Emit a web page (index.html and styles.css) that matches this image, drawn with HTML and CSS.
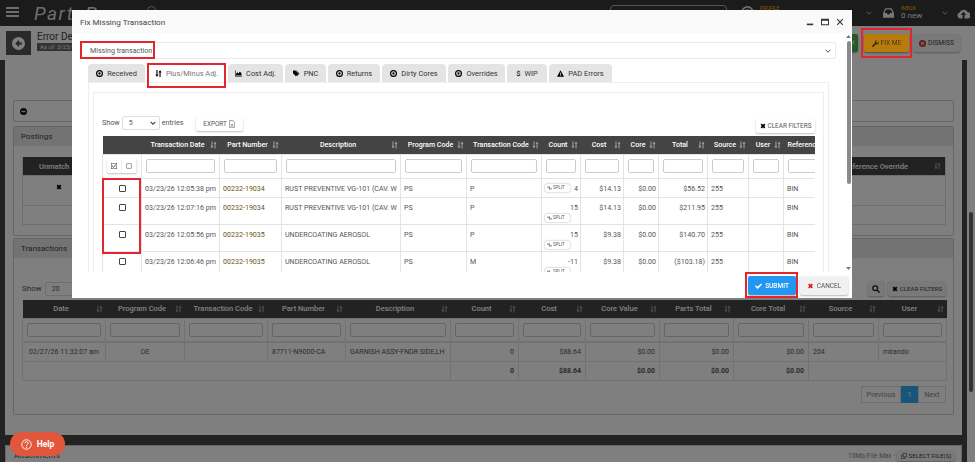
FILE: index.html
```html
<!DOCTYPE html>
<html lang="en">

<head>
    <meta charset="UTF-8">
    <meta name="viewport" content="width=device-width, initial-scale=1.0">
    <title>Fix Missing Transaction</title>
    <link rel="stylesheet" href="styles.css">
</head>

<body>

    <svg class="defs" aria-hidden="true">
        <symbol id="sort" viewBox="0 0 10 10"><path d="M2 0h1.600v6.500H5L2.800 10 .6 6.500H2zM6.400 10h1.600V3.500h1.400L7.200 0 5 3.500h1.400z" /></symbol>
        <symbol id="times" viewBox="0 0 10 10"><path d="M1 3l2-2 2 2 2-2 2 2-2 2 2 2-2 2-2-2-2 2-2-2 2-2z" /></symbol>
        <symbol id="check" viewBox="0 0 12 10"><path d="M0 5.500l1.800-1.800 2.700 2.700L10.200 .7 12 2.500 4.500 10z" /></symbol>
        <symbol id="split" viewBox="0 0 12 8"><path d="M5 0l3 2-3 2V3H0V1h5zM7 4v1h5v2H7v1L4 6z" /></symbol>
        <symbol id="dot" viewBox="0 0 12 12"><path fill-rule="evenodd" d="M6 0a6 6 0 1 1 0 12A6 6 0 0 1 6 0zm0 2a4 4 0 1 0 0 8 4 4 0 0 0 0-8zm0 2a2 2 0 1 1 0 4 2 2 0 0 1 0-4z" /></symbol>
    </svg>

    <div class="app">
        <header class="topbar">
            <div class="burger"><i></i><i></i><i></i></div>
            <div class="logo">PartsPro</div>
            <div class="top-search-icon"></div>
            <div class="top-search"></div>
            <svg class="top-user" viewBox="0 0 14 14"><circle cx="7" cy="7" r="6" fill="none" stroke="#ddd" stroke-width="2" /><circle cx="7" cy="5.500" r="2.200" fill="#ddd" /></svg>
            <div class="top-item top-profile"><span class="top-label">PROFILE</span></div>
            <svg class="top-chev" viewBox="0 0 10 6"><path d="M1 1l4 4 4-4" fill="none" stroke="#ccc" stroke-width="1.500" /></svg>
            <svg class="top-inbox" viewBox="0 0 14 12"><path fill-rule="evenodd" fill="#eee" d="M3 0h8l3 6v6H0V6zm.800 1.500L2 6h3l1 2h2l1-2h3l-1.800-4.500z" /></svg>
            <div class="top-item"><span class="top-label">INBOX</span><span class="top-val">0 new</span></div>
            <svg class="top-chev top-chev2" viewBox="0 0 10 6"><path d="M1 1l4 4 4-4" fill="none" stroke="#ccc" stroke-width="1.500" /></svg>
            <svg class="top-cloud" viewBox="0 0 14 11"><path fill="#eee" d="M3.500 11a3.300 3.300 0 0 1-.6-6.500A4.500 4.500 0 0 1 11.300 4 3.500 3.500 0 0 1 11 11H8V7h2L7 3.500 4 7h2v4z" /></svg>
        </header>

        <div class="subbar">
            <button class="back-btn">
                <svg viewBox="0 0 12 12"><path fill="#fff" fill-rule="evenodd" d="M6 0a6 6 0 1 1 0 12A6 6 0 0 1 6 0zm.500 2.500L3 6l3.500 3.500V7.200H9V4.800H6.500z" /></svg>
            </button>
            <div class="subbar__title">
                <div class="subbar__name">Error Details</div>
                <span class="subbar__date">As of: 3/25/26</span>
            </div>
            <div class="subbar__actions">
                <button class="act-btn act-btn--green">MATCH</button>
                <button class="act-btn act-btn--fix">FIX ME</button>
                <button class="act-btn act-btn--dismiss">
                    <svg viewBox="0 0 10 10"><circle cx="5" cy="5" r="5" fill="#d0322a" /><path d="M3 3l4 4M7 3l-4 4" stroke="#ddd" stroke-width="1.500" /></svg>
                    DISMISS
                </button>
            </div>
        </div>

        <div class="workspace">
            <div class="rail"></div>
            <main class="main">
                <div class="panel panel--note">
                    <svg class="minus-icon" viewBox="0 0 10 10"><circle cx="5" cy="5" r="5" fill="#111" /><rect x="2" y="4" width="6" height="2" fill="#ddd" /></svg>
                </div>

                <section class="panel panel--postings">
                    <h2 class="panel__head">Postings</h2>
                    <div class="panel__body panel__body--post">
                        <div class="post-table">
                            <div class="post-head">
                                <span class="post-unmatch">Unmatch</span>
                                <span class="post-ref">Reference Override</span>
                                <svg class="sort"><use href="#sort" /></svg>
                            </div>
                            <div class="post-row post-row--tall">
                                <svg class="post-x"><use href="#times" /></svg>
                            </div>
                            <div class="post-row"></div>
                        </div>
                    </div>
                </section>

                <section class="panel panel--trans">
                    <h2 class="panel__head">Transactions</h2>
                    <div class="panel__body panel__body--trans">
                        <div class="bg-tools">
                            <span>Show</span>
                            <div class="mini-select mini-select--bg">20</div>
                            <div class="bg-tools__right">
                                <button class="soft-btn soft-btn--icon">
                                    <svg viewBox="0 0 10 10"><circle cx="4" cy="4" r="3" fill="none" stroke="#222" stroke-width="1.600" /><path d="M6.300 6.300L9.500 9.500" stroke="#222" stroke-width="1.800" /></svg>
                                </button>
                                <button class="soft-btn"><svg class="ico-x"><use href="#times" /></svg>CLEAR FILTERS</button>
                            </div>
                        </div>
                        <table class="bg-table">
                            <colgroup>
                                <col class="b1"><col class="b2"><col class="b3"><col class="b4"><col class="b5"><col class="b6"><col class="b7"><col class="b8"><col class="b9"><col class="b10"><col class="b11"><col class="b12">
                            </colgroup>
                            <thead>
                                <tr>
                                    <th><div class="th"><span>Date</span><svg class="sort"><use href="#sort" /></svg></div></th>
                                    <th><div class="th"><span>Program Code</span><svg class="sort"><use href="#sort" /></svg></div></th>
                                    <th><div class="th"><span>Transaction Code</span><svg class="sort"><use href="#sort" /></svg></div></th>
                                    <th><div class="th"><span>Part Number</span><svg class="sort"><use href="#sort" /></svg></div></th>
                                    <th><div class="th"><span>Description</span><svg class="sort"><use href="#sort" /></svg></div></th>
                                    <th><div class="th"><span>Count</span><svg class="sort"><use href="#sort" /></svg></div></th>
                                    <th><div class="th"><span>Cost</span><svg class="sort"><use href="#sort" /></svg></div></th>
                                    <th><div class="th"><span>Core Value</span><svg class="sort"><use href="#sort" /></svg></div></th>
                                    <th><div class="th"><span>Parts Total</span><svg class="sort"><use href="#sort" /></svg></div></th>
                                    <th><div class="th"><span>Core Total</span><svg class="sort"><use href="#sort" /></svg></div></th>
                                    <th><div class="th"><span>Source</span><svg class="sort"><use href="#sort" /></svg></div></th>
                                    <th><div class="th"><span>User</span><svg class="sort"><use href="#sort" /></svg></div></th>
                                </tr>
                                <tr class="filter-row">
                                    <td><input></td><td><input></td><td><input></td><td><input></td><td><input></td><td><input></td><td><input></td><td><input></td><td><input></td><td><input></td><td><input></td><td><input></td>
                                </tr>
                            </thead>
                            <tbody>
                                <tr>
                                    <td class="ctr">02/27/26 11:32:07 am</td>
                                    <td class="ctr">OE</td>
                                    <td></td>
                                    <td>87711-N9000-CA</td>
                                    <td>GARNISH ASSY-FNDR SIDE,LH</td>
                                    <td class="num">0</td>
                                    <td class="num">$88.64</td>
                                    <td class="num">$0.00</td>
                                    <td class="num">$0.00</td>
                                    <td class="num">$0.00</td>
                                    <td>204</td>
                                    <td>mirando</td>
                                </tr>
                                <tr class="total-row">
                                    <td colspan="5"></td>
                                    <td class="num">0</td>
                                    <td class="num">$88.64</td>
                                    <td class="num">$0.00</td>
                                    <td class="num">$0.00</td>
                                    <td class="num">$0.00</td>
                                    <td colspan="2"></td>
                                </tr>
                            </tbody>
                        </table>
                        <div class="pager">
                            <span class="pager__item pager__item--prev">Previous</span>
                            <span class="pager__item pager__item--on">1</span>
                            <span class="pager__item pager__item--next">Next</span>
                        </div>
                    </div>
                </section>

                <div class="band"></div>

                <section class="panel panel--attach">
                    <span class="attach-name">Attachments</span>
                    <span class="attach-max">10Mb/File Max -</span>
                    <button class="soft-btn soft-btn--file">
                        <svg viewBox="0 0 10 10"><path fill="none" stroke="#333" d="M3.500.5h6v6h-6zM.5 3.500h3M.5 3.500v6h6v-3" /></svg>
                        SELECT FILE(S)
                    </button>
                </section>
            </main>
            <div class="rail rail--right"></div>
            <div class="page-scroll"><div class="page-scroll__thumb"></div></div>
        </div>
    </div>

    <div class="backdrop"></div>

    <div class="fix-me-lit">
        <svg viewBox="0 0 10 10"><path d="M9.800 2.300A3 3 0 0 1 5.900 6L2 9.800a1 1 0 0 1-1.600-1.600L4.200 4.300A3 3 0 0 1 7.700.4L6 2.200l.3 1.700 1.800.3z" /></svg>
        FIX ME
    </div>

    <button class="help">
        <svg viewBox="0 0 14 14"><circle cx="7" cy="7" r="6" fill="none" stroke="#fff" stroke-width="1.200" /><path d="M5 5.500a2 2 0 1 1 3 1.700c-.7.400-1 .7-1 1.500" fill="none" stroke="#fff" stroke-width="1.200" /><circle cx="7" cy="10.400" r=".8" fill="#fff" /></svg>
        Help
    </button>

    <div class="modal">
        <div class="modal__head">
            <span class="modal__title">Fix Missing Transaction</span>
            <div class="modal__win">
                <svg viewBox="0 0 10 10"><rect x="1" y="7" width="8" height="2" /></svg>
                <svg viewBox="0 0 10 10"><path fill-rule="evenodd" d="M0 1h10v8H0zm1.200 2.500v4.300h7.600V3.500z" /></svg>
                <svg viewBox="0 0 10 10"><path d="M2 1l3 3 3-3 1 1-3 3 3 3-1 1-3-3-3 3-1-1 3-3-3-3z" /></svg>
            </div>
        </div>

        <div class="modal__middle">
            <div class="modal__body">
                <div class="type-select">
                    <span>Missing transaction</span>
                    <svg viewBox="0 0 10 6"><path d="M1 1l4 4 4-4" fill="none" stroke="#444" stroke-width="1.600" /></svg>
                </div>

                <div class="tabs">
                    <div class="tab tab--received"><svg><use href="#dot" /></svg>Received</div>
                    <div class="tab tab--active tab--plus">
                        <svg viewBox="0 0 10 10"><use href="#sort" /></svg>Plus/Minus Adj.
                    </div>
                    <div class="tab tab--cost">
                        <svg viewBox="0 0 12 10"><path d="M0 0h1v9h11v1H0zM2 8V5l2-2 2 2 2-3 3 2v4z" /></svg>Cost Adj.
                    </div>
                    <div class="tab tab--pnc">
                        <svg viewBox="0 0 12 10"><path d="M0 0h4l5 5-4 4.500L0 4.500zM6 0l5 5-4 4.500-.8-.8L9.500 5 5 0z" /></svg>PNC
                    </div>
                    <div class="tab tab--returns"><svg><use href="#dot" /></svg>Returns</div>
                    <div class="tab tab--dirty"><svg><use href="#dot" /></svg>Dirty Cores</div>
                    <div class="tab tab--over"><svg><use href="#dot" /></svg>Overrides</div>
                    <div class="tab tab--wip"><span class="tab__dollar">$</span>WIP</div>
                    <div class="tab tab--pad">
                        <svg viewBox="0 0 12 11"><path fill-rule="evenodd" d="M6 0l6 11H0zM5.300 4v3.500h1.400V4zm0 4.300v1.300h1.400V8.300z" /></svg>PAD Errors
                    </div>
                </div>

                <div class="tab-pane">
                    <div class="inner-box">
                        <div class="tools">
                            <span>Show</span>
                            <div class="mini-select">5
                                <svg viewBox="0 0 10 6"><path d="M1 1l4 4 4-4" fill="none" stroke="#444" stroke-width="1.800" /></svg>
                            </div>
                            <span>entries</span>
                            <button class="white-btn white-btn--export">EXPORT
                                <svg viewBox="0 0 10 12"><path fill="none" stroke="#555" d="M.5.500h6l3 3v8h-9zM3 6l4 4M7 6l-4 4" /></svg>
                            </button>
                            <button class="white-btn white-btn--clear"><svg class="ico-x"><use href="#times" /></svg>CLEAR FILTERS</button>
                        </div>

                        <div class="tx-wrap">
                            <table class="tx-table">
                                <colgroup>
                                    <col class="m1"><col class="m2"><col class="m3"><col class="m4"><col class="m5"><col class="m6"><col class="m7"><col class="m8"><col class="m9"><col class="m10"><col class="m11"><col class="m12"><col class="m13">
                                </colgroup>
                                <thead>
                                    <tr>
                                        <th></th>
                                        <th><div class="th"><span>Transaction Date</span><svg class="sort"><use href="#sort" /></svg></div></th>
                                        <th><div class="th"><span>Part Number</span><svg class="sort"><use href="#sort" /></svg></div></th>
                                        <th><div class="th"><span>Description</span><svg class="sort"><use href="#sort" /></svg></div></th>
                                        <th><div class="th"><span>Program Code</span><svg class="sort"><use href="#sort" /></svg></div></th>
                                        <th><div class="th"><span>Transaction Code</span><svg class="sort"><use href="#sort" /></svg></div></th>
                                        <th><div class="th"><span>Count</span><svg class="sort"><use href="#sort" /></svg></div></th>
                                        <th><div class="th"><span>Cost</span><svg class="sort"><use href="#sort" /></svg></div></th>
                                        <th><div class="th"><span>Core</span><svg class="sort"><use href="#sort" /></svg></div></th>
                                        <th><div class="th"><span>Total</span><svg class="sort"><use href="#sort" /></svg></div></th>
                                        <th><div class="th"><span>Source</span><svg class="sort"><use href="#sort" /></svg></div></th>
                                        <th><div class="th"><span>User</span><svg class="sort"><use href="#sort" /></svg></div></th>
                                        <th><div class="th th--left"><span>Reference</span></div></th>
                                    </tr>
                                    <tr class="filter-row">
                                        <td>
                                            <div class="check-pair">
                                                <span><svg viewBox="0 0 10 10"><rect x=".5" y=".5" width="9" height="9" fill="none" stroke="#555" /><path d="M2 5l2 2 4-4" fill="none" stroke="#333" stroke-width="1.600" /></svg></span>
                                                <span><svg viewBox="0 0 10 10"><rect x="1" y="1" width="8" height="8" rx="1" fill="none" stroke="#555" /></svg></span>
                                            </div>
                                        </td>
                                        <td><input></td><td><input></td><td><input></td><td><input></td><td><input></td><td><input></td><td><input></td><td><input></td><td><input></td><td><input></td><td><input></td><td><input></td>
                                    </tr>
                                </thead>
                                <tbody>
                                    <tr class="row-short">
                                        <td class="ctr"><input type="checkbox"></td>
                                        <td>03/23/26 12:05:38 pm</td>
                                        <td class="pn">00232-19034</td>
                                        <td>RUST PREVENTIVE VG-101 (CAV. W</td>
                                        <td>PS</td>
                                        <td>P</td>
                                        <td class="num"><button class="split split--block"><svg><use href="#split" /></svg>SPLIT</button>4</td>
                                        <td class="num">$14.13</td>
                                        <td class="num">$0.00</td>
                                        <td class="num">$56.52</td>
                                        <td>255</td>
                                        <td></td>
                                        <td>BIN</td>
                                    </tr>
                                    <tr>
                                        <td class="ctr"><input type="checkbox"></td>
                                        <td>03/23/26 12:07:16 pm</td>
                                        <td class="pn">00232-19034</td>
                                        <td>RUST PREVENTIVE VG-101 (CAV. W</td>
                                        <td>PS</td>
                                        <td>P</td>
                                        <td class="num">15<br><button class="split split--block"><svg><use href="#split" /></svg>SPLIT</button></td>
                                        <td class="num">$14.13</td>
                                        <td class="num">$0.00</td>
                                        <td class="num">$211.95</td>
                                        <td>255</td>
                                        <td></td>
                                        <td>BIN</td>
                                    </tr>
                                    <tr>
                                        <td class="ctr"><input type="checkbox"></td>
                                        <td>03/23/26 12:05:56 pm</td>
                                        <td class="pn">00232-19035</td>
                                        <td>UNDERCOATING AEROSOL</td>
                                        <td>PS</td>
                                        <td>P</td>
                                        <td class="num">15<br><button class="split split--block"><svg><use href="#split" /></svg>SPLIT</button></td>
                                        <td class="num">$9.38</td>
                                        <td class="num">$0.00</td>
                                        <td class="num">$140.70</td>
                                        <td>255</td>
                                        <td></td>
                                        <td>BIN</td>
                                    </tr>
                                    <tr>
                                        <td class="ctr"><input type="checkbox"></td>
                                        <td>03/23/26 12:06:46 pm</td>
                                        <td class="pn">00232-19035</td>
                                        <td>UNDERCOATING AEROSOL</td>
                                        <td>PS</td>
                                        <td>M</td>
                                        <td class="num">-11<br><button class="split split--block"><svg><use href="#split" /></svg>SPLIT</button></td>
                                        <td class="num">$9.38</td>
                                        <td class="num">$0.00</td>
                                        <td class="num">($103.18)</td>
                                        <td>255</td>
                                        <td></td>
                                        <td>BIN</td>
                                    </tr>
                                </tbody>
                            </table>
                        </div>
                    </div>
                </div>
            </div>

            <div class="modal__scroll">
                <svg viewBox="0 0 8 5"><path d="M4 0l4 5H0z" /></svg>
                <div class="modal__thumb"></div>
                <svg class="modal__down" viewBox="0 0 8 5"><path d="M0 0h8L4 5z" /></svg>
            </div>
        </div>

        <div class="modal__foot">
            <button class="foot-btn foot-btn--submit"><svg><use href="#check" /></svg>SUBMIT</button>
            <button class="foot-btn foot-btn--cancel"><svg><use href="#times" /></svg>CANCEL</button>
        </div>
    </div>

    <!-- red markers drawn over the screenshot -->
    <div class="mark mark--select"></div>
    <div class="mark mark--tab"></div>
    <div class="mark mark--checks"></div>
    <div class="mark mark--submit"></div>
    <div class="mark mark--fix"></div>

</body>

</html>
```

FILE: styles.css
```css
* {
    box-sizing: border-box;
}

html,
body {
    height: 100%;
}

body {
    margin: 0;
    overflow: hidden;
    background: #fff;
    color: #555;
    font-family: Roboto, "Liberation Sans", sans-serif;
    font-size: 8px;
}

button {
    font-family: inherit;
    cursor: pointer;
}

.defs {
    position: absolute;
    width: 0;
    height: 0;
}

.app {
    display: flex;
    flex-direction: column;
    height: 462px;
}

/* top bar */
.topbar {
    display: flex;
    align-items: flex-start;
    flex: 0 0 26px;
    background: #363636;
    color: #eee;
}

.burger {
    width: 13px;
    margin: 7px 0 0 6px;
}

.burger i {
    display: block;
    height: 2px;
    margin-bottom: 2px;
    background: #ddd;
}

.logo {
    margin: 2px 0 0 15px;
    width: 93px;
    font-size: 19px;
    font-style: italic;
    letter-spacing: 1.5px;
    color: #ddd;
}

.top-search-icon {
    width: 9px;
    height: 9px;
    margin: 6px 0 0 20px;
    border: 1px solid #aaa;
    border-radius: 50%;
}

.top-search {
    width: 117px;
    height: 20px;
    margin: 5px 0 0 454px;
    border: 1px solid #aaa;
    border-radius: 4px;
}

.top-user {
    width: 13px;
    height: 13px;
    margin: 6px 0 0 14px;
}

.top-item {
    display: flex;
    flex-direction: column;
    margin: 5px 0 0 7px;
    width: 40px;
}

.top-profile {
    width: 100px;
    margin-left: 6px;
}

.top-label {
    font-size: 5px;
    color: #ffb300;
    line-height: 6px;
}

.top-val {
    font-size: 8px;
    line-height: 9px;
}

.top-chev {
    width: 6px;
    height: 4px;
    margin: 11px 0 0 6px;
}

.top-chev2 {
    margin-left: 1px;
}

.top-inbox {
    width: 11px;
    height: 10px;
    margin: 8px 0 0 11px;
}

.top-cloud {
    width: 13px;
    height: 11px;
    margin: 8px 0 0 9px;
}

/* strip under the top bar */
.subbar {
    display: flex;
    flex: 0 0 34px;
    padding: 5px 15px 0 6px;
    background: #fff;
}

.back-btn {
    width: 25px;
    height: 24px;
    padding: 6px;
    border: 0;
    background: #555;
}

.subbar__title {
    margin-left: 6px;
}

.subbar__name {
    font-size: 10px;
    line-height: 12px;
    color: #444;
}

.subbar__date {
    display: block;
    width: 60px;
    padding: 0 3px;
    background: #666;
    color: #eee;
    font-size: 6px;
    line-height: 8px;
}

.subbar__actions {
    display: flex;
    gap: 4px;
    margin-left: auto;
    padding-top: 3px;
}

.act-btn {
    display: flex;
    align-items: center;
    justify-content: center;
    gap: 2px;
    height: 18px;
    padding: 0;
    border: 0;
    border-radius: 2px;
    font-size: 6.7px;
    box-shadow: 0 1px 2px rgba(0, 0, 0, 0.3);
}

.act-btn svg {
    width: 7px;
    height: 7px;
}

.act-btn--green {
    width: 30px;
    margin-right: 2px;
    background: #4caf50;
    color: #fff;
}

.act-btn--fix {
    width: 45px;
    visibility: hidden;
}

.act-btn--dismiss {
    width: 47px;
    background: #f2f2f2;
    color: #444;
}

/* page body */
.workspace {
    display: flex;
    flex: 1;
    min-height: 0;
}

.rail {
    flex: 0 0 5px;
    background: #444;
}

.main {
    flex: 1;
    padding: 40px 8px 0;
    overflow: hidden;
    background: #fff;
}

.page-scroll {
    flex: 0 0 8px;
    padding: 152px 2px 0;
    background: #fff;
}

.page-scroll__thumb {
    height: 180px;
    border-radius: 2px;
    background: #666;
}

.panel {
    border: 1px solid #ccc;
    border-radius: 2px;
}

.panel--note {
    display: flex;
    align-items: center;
    height: 22px;
    padding-left: 6px;
    margin-bottom: 4px;
}

.minus-icon {
    width: 7px;
    height: 7px;
}

.panel--postings {
    height: 110px;
    margin-bottom: 2px;
}

.panel--trans {
    height: 177px;
}

.panel__head {
    height: 19px;
    margin: 0;
    padding-left: 7px;
    background: #e6e6e6;
    color: #444;
    font-size: 8px;
    font-weight: 400;
    line-height: 19px;
}

.panel__body--post {
    padding: 11px 7px 0 8px;
}

.post-table {
    border: 1px solid #ddd;
    border-top: 0;
}

.post-head {
    display: flex;
    align-items: center;
    height: 18px;
    background: #444;
    color: #fff;
    font-size: 7.5px;
    font-weight: 500;
}

.post-unmatch {
    margin-left: 16px;
}

.post-ref {
    margin-left: auto;
    margin-right: 26px;
}

.post-head .sort {
    margin-right: 4px;
}

.post-row {
    display: flex;
    height: 19px;
    padding: 8px 0 0 33px;
    border-top: 1px solid #ddd;
}

.post-row--tall {
    height: 30px;
}

.post-x {
    width: 6px;
    height: 6px;
}

.panel__body--trans {
    padding: 22px 7px 0 8px;
}

.bg-tools {
    display: flex;
    align-items: center;
    gap: 3px;
    height: 20px;
    padding-bottom: 3px;
    font-size: 8px;
}

.bg-tools__right {
    display: flex;
    gap: 4px;
    margin-left: auto;
}

.mini-select {
    display: flex;
    align-items: center;
    justify-content: space-between;
    width: 38px;
    height: 14px;
    padding: 0 3px 0 6px;
    border: 1px solid #ddd;
    border-radius: 2px;
    background: #fff;
    font-size: 7px;
}

.mini-select svg {
    width: 6px;
    height: 4px;
}

.mini-select--bg {
    width: 32px;
}

.soft-btn {
    display: flex;
    align-items: center;
    justify-content: center;
    gap: 2px;
    width: 58px;
    height: 15px;
    padding: 0;
    border: 0;
    border-radius: 2px;
    background: #f2f2f2;
    color: #444;
    font-size: 6.2px;
    box-shadow: 0 1px 2px rgba(0, 0, 0, 0.3);
}

.soft-btn--icon {
    width: 16px;
}

.soft-btn--icon svg {
    width: 8px;
    height: 8px;
}

.ico-x {
    width: 6px;
    height: 6px;
}

.sort {
    flex: 0 0 auto;
    width: 7px;
    height: 8px;
    fill: #999;
}

.th {
    display: flex;
    align-items: center;
}

.th span {
    flex: 1;
    text-align: center;
    white-space: nowrap;
}

.th--left span {
    text-align: left;
}

/* shared table look */
.bg-table,
.tx-table {
    border-collapse: collapse;
    table-layout: fixed;
}

.bg-table th,
.tx-table th {
    height: 18px;
    padding: 0 3px 0 4px;
    background: #444;
    color: #fff;
    font-weight: 500;
}

.bg-table td,
.tx-table td {
    border: 1px solid #e4e4e4;
    white-space: nowrap;
    overflow: hidden;
}

.filter-row input {
    display: block;
    width: 100%;
    height: 14px;
    border: 1px solid #ccc;
    border-radius: 2px;
    background: #fff;
}

.num {
    text-align: right;
}

.ctr {
    text-align: center;
}

/* table in the page behind */
.bg-table {
    width: 924px;
    font-size: 7px;
}

.bg-table th {
    font-size: 7.5px;
}

.b1 { width: 83px; }
.b2 { width: 79px; }
.b3 { width: 83px; }
.b4 { width: 78px; }
.b5 { width: 105px; }
.b6 { width: 68px; }
.b7 { width: 67px; }
.b8 { width: 74px; }
.b9 { width: 74px; }
.b10 { width: 75px; }
.b11 { width: 70px; }
.b12 { width: 68px; }

.bg-table .filter-row td {
    height: 24px;
    padding: 0 4px;
    border-bottom-width: 2px;
}

.bg-table tbody td {
    height: 19px;
    padding: 0 4px;
}

.total-row td {
    font-weight: 700;
}

.pager {
    display: flex;
    justify-content: flex-end;
    margin-top: 5px;
    font-size: 7.5px;
    color: #888;
}

.pager__item {
    height: 17px;
    border: 1px solid #ddd;
    line-height: 15px;
    text-align: center;
}

.pager__item--prev {
    width: 40px;
}

.pager__item--next {
    width: 28px;
}

.pager__item--on {
    width: 17px;
    background: #33aaf5;
    border-color: #33aaf5;
    color: #fff;
}

.band {
    height: 10px;
    margin: 20px -8px 0;
    background: #444;
}

.panel--attach {
    display: flex;
    align-items: center;
    height: 30px;
    margin: 0 -8px;
    padding: 0 6px 9px 8px;
    font-size: 8px;
}

.attach-max {
    margin-left: auto;
    margin-right: 2px;
    color: #888;
    font-size: 6.5px;
}

.soft-btn--file {
    height: 11px;
}

.soft-btn--file svg {
    width: 6px;
    height: 6px;
}

/* help pill */
.help {
    position: absolute;
    left: 10px;
    top: 432px;
    display: flex;
    align-items: center;
    justify-content: center;
    gap: 5px;
    width: 55px;
    height: 24px;
    border: 0;
    border-radius: 12px;
    background: #e2573c;
    color: #fff;
    font-size: 8.5px;
    font-weight: 700;
}

.help svg {
    width: 11px;
    height: 11px;
}

/* backdrop and modal */
.backdrop {
    position: fixed;
    inset: 0;
    background: rgba(0, 0, 0, 0.5);
}

.fix-me-lit {
    position: absolute;
    left: 864px;
    top: 34px;
    display: flex;
    align-items: center;
    justify-content: center;
    gap: 2px;
    width: 45px;
    height: 18px;
    border-radius: 2px;
    background: #b97b0b;
    color: #4a3512;
    font-size: 6.6px;
    box-shadow: 0 1px 2px rgba(0, 0, 0, 0.4);
}

.fix-me-lit svg {
    width: 7px;
    height: 7px;
    fill: #3b2a0c;
}

.modal {
    position: absolute;
    left: 72px;
    top: 10px;
    display: flex;
    flex-direction: column;
    width: 780px;
    height: 288px;
    background: #fff;
}

.modal__head {
    display: flex;
    align-items: center;
    flex: 0 0 23px;
    padding: 0 8px;
    background: #fafafa;
}

.modal__title {
    color: #444;
    font-size: 8.1px;
}

.modal__win {
    display: flex;
    gap: 7px;
    margin-left: auto;
}

.modal__win svg {
    width: 8px;
    height: 8px;
    fill: #333;
}

.modal__middle {
    display: flex;
    flex: 0 0 239px;
    min-height: 0;
}

.modal__body {
    flex: 1;
    min-width: 0;
    padding: 9px 9px 0 8px;
    overflow: hidden;
}

.modal__scroll {
    display: flex;
    flex-direction: column;
    align-items: center;
    flex: 0 0 7px;
    padding-top: 2px;
}

.modal__scroll svg {
    width: 5px;
    height: 3px;
    fill: #777;
}

.modal__thumb {
    width: 4px;
    height: 143px;
    margin-top: 3px;
    border-radius: 2px;
    background: #8a8a8a;
}

.modal__scroll .modal__down {
    margin-top: auto;
    margin-bottom: 2px;
}

.type-select {
    display: flex;
    align-items: center;
    justify-content: space-between;
    height: 17px;
    padding: 0 4px 0 9px;
    border: 1px solid #eaeaea;
    border-radius: 2px;
    color: #555;
    font-size: 7.1px;
}

.type-select svg {
    width: 6px;
    height: 4px;
}

.tabs {
    display: flex;
    gap: 2px;
    height: 18px;
    margin: 5px 0 0 8px;
}

.tab {
    display: flex;
    align-items: center;
    justify-content: center;
    gap: 4px;
    border-radius: 4px 4px 0 0;
    background: #e4e4e4;
    color: #333;
    font-size: 7.4px;
}

.tab svg {
    width: 7px;
    height: 7px;
}

.tab--received { width: 57px; }
.tab--plus { width: 77px; margin-left: 1px; }
.tab--cost { width: 55px; margin-left: 1px; }
.tab--pnc { width: 41px; }
.tab--returns { width: 52px; }
.tab--dirty { width: 64px; }
.tab--over { width: 57px; }
.tab--wip { width: 40px; }
.tab--pad { width: 63px; }

.tab--active {
    background: #fff;
    color: #777;
}

.tab__dollar {
    font-weight: 700;
}

.tab-pane {
    width: 741px;
    margin-left: 8px;
    padding: 9px 5px 0 4px;
    border: 1px solid #eee;
    border-bottom: 0;
}

.inner-box {
    width: 731px;
    padding: 23px 8px 0;
    border: 1px solid #eee;
    border-bottom: 0;
}

.tools {
    display: flex;
    align-items: flex-start;
    gap: 2px;
    height: 20px;
    color: #555;
    font-size: 7.2px;
    line-height: 14px;
}

.white-btn {
    display: flex;
    align-items: center;
    justify-content: center;
    gap: 2px;
    height: 14px;
    padding: 0;
    border: 0;
    border-radius: 2px;
    background: #fff;
    color: #555;
    font-size: 6.4px;
    box-shadow: 0 1px 2px rgba(0, 0, 0, 0.25);
}

.white-btn--export {
    width: 47px;
    margin: 1px 0 0 10px;
}

.white-btn--export svg {
    width: 6px;
    height: 8px;
}

.white-btn--clear {
    width: 59px;
    height: 15px;
    margin: 2px 0 0 auto;
}

.tx-wrap {
    overflow: hidden;
}

.tx-table {
    width: 745px;
    color: #555;
    font-size: 7.1px;
}

.m1 { width: 39px; }
.m2 { width: 78px; }
.m3 { width: 62px; }
.m4 { width: 119px; }
.m5 { width: 66px; }
.m6 { width: 75px; }
.m7 { width: 39px; }
.m8 { width: 43px; }
.m9 { width: 35px; }
.m10 { width: 49px; }
.m11 { width: 41px; }
.m12 { width: 35px; }
.m13 { width: 64px; }

.tx-table .filter-row td {
    height: 24px;
    padding: 0 4px;
}

.tx-table tbody td {
    height: 27px;
    padding: 4px 2px 0 3px;
    vertical-align: top;
    line-height: 11px;
}

.tx-table tbody .row-short td {
    height: 19px;
}

.tx-table .pn {
    color: #6b5320;
}

.tx-table input[type="checkbox"] {
    appearance: none;
    display: block;
    width: 7px;
    height: 7px;
    margin: 2px auto 0;
    border: 1px solid #444;
    border-radius: 1px;
    background: #fff;
}

.check-pair {
    display: flex;
    height: 14px;
    border-radius: 2px;
    box-shadow: 0 1px 2px rgba(0, 0, 0, 0.25);
}

.check-pair span {
    display: flex;
    align-items: center;
    justify-content: center;
    flex: 1;
    border-right: 1px solid #eee;
}

.check-pair svg {
    width: 6px;
    height: 6px;
}

.split {
    display: inline-flex;
    align-items: center;
    gap: 1px;
    width: 25px;
    height: 8px;
    padding: 0 2px;
    border: 0;
    border-radius: 2px;
    background: #fff;
    color: #555;
    font-size: 4.5px;
    box-shadow: 0 0 2px rgba(0, 0, 0, 0.4);
}

.split svg {
    width: 5px;
    height: 4px;
    fill: #555;
}

.split--block {
    float: left;
    margin-top: 1px;
}

.modal__foot {
    display: flex;
    justify-content: flex-end;
    gap: 4px;
    flex: 1;
    padding: 4px 4px 0 0;
}

.foot-btn {
    display: flex;
    align-items: center;
    justify-content: center;
    gap: 3px;
    width: 48px;
    height: 19px;
    padding: 0;
    border: 0;
    border-radius: 2px;
    font-size: 6.5px;
    box-shadow: 0 1px 2px rgba(0, 0, 0, 0.3);
}

.foot-btn svg {
    width: 7px;
    height: 6px;
}

.foot-btn--submit {
    background: #2196f3;
    color: #fff;
    font-weight: 500;
}

.foot-btn--submit svg {
    fill: #fff;
}

.foot-btn--cancel {
    background: #f1f1f1;
    color: #555;
}

.foot-btn--cancel svg {
    fill: #e01818;
}

/* red markers */
.mark {
    position: absolute;
    border: 2px solid #e3262c;
}

.mark--select { left: 80px; top: 41px; width: 75px; height: 18px; }
.mark--tab { left: 147px; top: 63px; width: 79px; height: 25px; }
.mark--checks { left: 102px; top: 178px; width: 39px; height: 76px; }
.mark--submit { left: 745px; top: 272px; width: 53px; height: 26px; }
.mark--fix { left: 861px; top: 28px; width: 51px; height: 30px; }
```
